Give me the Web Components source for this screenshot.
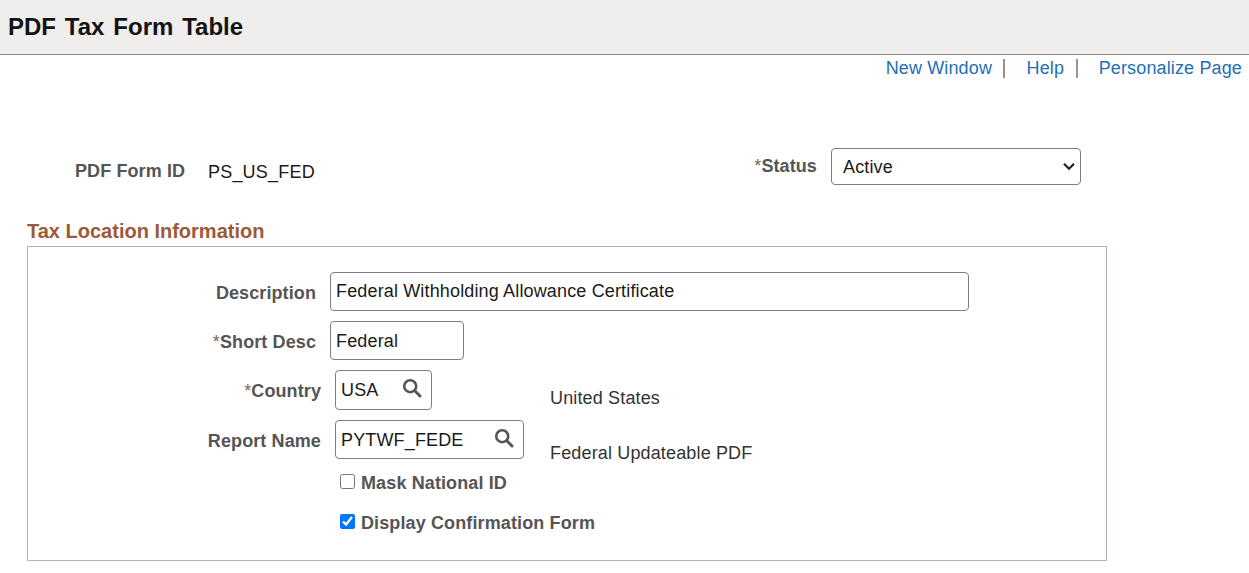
<!DOCTYPE html>
<html lang="en">
<head>
<meta charset="utf-8">
<title>PDF Tax Form Table</title>
<style>
  html, body { margin: 0; background: #fff; }
  body { font-family: "Liberation Sans", Arial, sans-serif; height: 573px; overflow: hidden; }
</style>
</head>
<body>
<page-header>PDF Tax Form Table</page-header>
<page-links>
  <a slot="a">New Window</a>
  <a slot="b">Help</a>
  <a slot="c">Personalize Page</a>
</page-links>
<form-summary label="PDF Form ID" value="PS_US_FED" status="Active"></form-summary>
<group-box heading="Tax Location Information">
  <form-field label="Description" label-width="288">
    <text-box width="639" line="37">Federal Withholding Allowance Certificate</text-box>
  </form-field>
  <form-field label="Short Desc" required label-width="288">
    <text-box width="134">Federal</text-box>
  </form-field>
  <form-field label="Country" required label-width="293" side-top="18">
    <text-box width="97" height="40" lookup="60">USA</text-box>
    <span slot="side">United States</span>
  </form-field>
  <form-field label="Report Name" label-width="293" side-top="23">
    <text-box width="189" lookup="152">PYTWF_FEDE</text-box>
    <span slot="side">Federal Updateable PDF</span>
  </form-field>
  <check-field label="Mask National ID"></check-field>
  <check-field label="Display Confirmation Form" checked></check-field>
</group-box>

<script>
class PageHeader extends HTMLElement {
  constructor() {
    super();
    this.attachShadow({ mode: 'open' });
    this.shadowRoot.innerHTML = `
      <style>
        :host {
          display: flex;
          align-items: center;
          height: 54px;
          padding-left: 8px;
          background: #efeeec;
          border-bottom: 1px solid #8a8580;
          font-size: 24px;
          font-weight: bold;
          color: #141414;
          word-spacing: 2.2px;
        }
      </style>
      <slot></slot>
    `;
  }
}

class PageLinks extends HTMLElement {
  constructor() {
    super();
    this.attachShadow({ mode: 'open' });
    this.shadowRoot.innerHTML = `
      <style>
        :host {
          display: flex;
          justify-content: flex-end;
          align-items: center;
          height: 26px;
          padding-right: 7px;
          font-size: 18px;
          letter-spacing: .14px;
          color: #1f6fb5;
        }
        .sep {
          width: 1.5px;
          height: 19px;
          background: #a98a76;
          margin: 0 22px 0 11px;
        }
        .sep.two { margin: 0 21px 0 12px; background: #8f98a3; }
      </style>
      <slot name="a"></slot><span class="sep"></span>
      <slot name="b"></slot><span class="sep two"></span>
      <slot name="c"></slot>
    `;
  }
}

class FormSummary extends HTMLElement {
  constructor() {
    super();
    this.attachShadow({ mode: 'open' });
    this.shadowRoot.innerHTML = `
      <style>
        :host {
          display: flex;
          align-items: flex-start;
          margin-top: 67px;
          height: 37px;
          padding-left: 75px;
          font-size: 18px;
        }
        .label { font-weight: bold; color: #555; letter-spacing: .1px; }
        .id-label { margin-top: 13px; width: 133px; }
        .value { margin-top: 14px; color: #1a1a1a; width: 545px; letter-spacing: .2px; }
        .status { margin-top: 8px; width: 64px; white-space: nowrap; text-align: right; }
        .star { font-weight: normal; color: #7a6a5c; }
        .select { position: relative; margin-left: 14px; }
        select {
          display: block;
          width: 250px;
          height: 37px;
          padding: 0 11px;
          box-sizing: border-box;
          border: 1px solid #7f7f7f;
          border-radius: 4px;
          background: #fff;
          appearance: none;
          font: 18px "Liberation Sans", Arial, sans-serif;
          letter-spacing: .15px;
          color: #1a1a1a;
        }
        svg { position: absolute; right: 6px; top: 14px; width: 12px; height: 9px; pointer-events: none; }
      </style>
      <span class="label id-label"></span>
      <span class="value"></span>
      <span class="label status"><span class="star">*</span>Status</span>
      <div class="select">
        <select><option></option></select>
        <svg viewBox="0 0 12 9" fill="none" stroke="#222" stroke-width="2.2"><path d="M1 1.8 6 6.8 11 1.8"/></svg>
      </div>
    `;
    this.shadowRoot.querySelector('.id-label').textContent = this.getAttribute('label');
    this.shadowRoot.querySelector('.value').textContent = this.getAttribute('value');
    this.shadowRoot.querySelector('option').textContent = this.getAttribute('status');
  }
}

class GroupBox extends HTMLElement {
  constructor() {
    super();
    this.attachShadow({ mode: 'open' });
    this.shadowRoot.innerHTML = `
      <style>
        :host {
          display: block;
          margin: 34px 0 0 27px;
          width: 1080px;
        }
        h2 {
          margin: 0;
          height: 27px;
          font-size: 20px;
          line-height: 25px;
          font-weight: bold;
          color: #9c5a38;
        }
        .box {
          box-sizing: border-box;
          height: 315px;
          border: 1px solid #b5b1ab;
          padding-top: 25px;
          display: flex;
          flex-direction: column;
          gap: 10px;
        }
      </style>
      <h2></h2>
      <div class="box"><slot></slot></div>
    `;
    this.shadowRoot.querySelector('h2').textContent = this.getAttribute('heading');
  }
}

class FormField extends HTMLElement {
  constructor() {
    super();
    this.attachShadow({ mode: 'open' });
    this.shadowRoot.innerHTML = `
      <style>
        :host {
          display: flex;
          align-items: center;
          font-size: 18px;
        }
        .label {
          flex: none;
          margin-right: 14px;
          text-align: right;
          font-weight: bold;
          letter-spacing: .1px;
          color: #555;
          padding-top: 3px;
        }
        .star { font-weight: normal; color: #7a6a5c; }
        .control { flex: none; }
        /* no height of its own, the text must not stretch the row */
        .side { align-self: flex-start; height: 0; color: #333; letter-spacing: .15px; }
      </style>
      <span class="label"></span>
      <div class="control"><slot></slot></div>
      <div class="side"><slot name="side"></slot></div>
    `;
    const $label = this.shadowRoot.querySelector('.label');
    $label.style.width = this.getAttribute('label-width') + 'px';
    $label.innerHTML = (this.hasAttribute('required') ? '<span class="star">*</span>' : '');
    $label.append(this.getAttribute('label'));
    // the two lookup rows share one column, so the side text lines up
    if (this.hasAttribute('side-top')) {
      this.shadowRoot.querySelector('.control').style.width = '215px';
      this.shadowRoot.querySelector('.side').style.marginTop = this.getAttribute('side-top') + 'px';
    }
  }
}

class TextBox extends HTMLElement {
  constructor() {
    super();
    this.attachShadow({ mode: 'open' });
    const lookup = this.getAttribute('lookup');
    this.shadowRoot.innerHTML = `
      <style>
        :host {
          display: block;
          box-sizing: border-box;
          position: relative;
          height: 39px;
          padding: 0 5px;
          border: 1px solid #7f7f7f;
          border-radius: 4px;
          background: #fff;
          font-size: 18px;
          line-height: 37px;
          letter-spacing: .15px;
          color: #1a1a1a;
        }
        svg { position: absolute; top: 7px; width: 20px; height: 20px; }
      </style>
      <slot></slot>
      ${lookup ? `<svg viewBox="0 0 20 20" style="left:${+lookup + 6}px" fill="none" stroke="#555" stroke-linecap="round">
        <circle cx="8.2" cy="8.2" r="6" stroke-width="2.6"/>
        <path d="M12.8 12.8 18 18" stroke-width="3"/>
      </svg>` : ''}
    `;
    this.style.width = this.getAttribute('width') + 'px';
    if (this.hasAttribute('height')) this.style.height = this.getAttribute('height') + 'px';
    this.style.lineHeight = (this.getAttribute('line') || 39) + 'px';
  }
}

class CheckField extends HTMLElement {
  constructor() {
    super();
    this.attachShadow({ mode: 'open' });
    this.shadowRoot.innerHTML = `
      <style>
        :host {
          display: flex;
          align-items: center;
          height: 30px;
          padding-left: 312px;
          font-size: 18px;
          font-weight: bold;
          letter-spacing: .12px;
          color: #555;
        }
        input {
          margin: 0 6px 6px 0;
          width: 15px;
          height: 15px;
        }
        span { margin-bottom: 2px; }
      </style>
      <input type="checkbox">
      <span></span>
    `;
    this.shadowRoot.querySelector('span').textContent = this.getAttribute('label');
    this.shadowRoot.querySelector('input').checked = this.hasAttribute('checked');
  }
}

customElements.define('page-header', PageHeader);
customElements.define('page-links', PageLinks);
customElements.define('form-summary', FormSummary);
customElements.define('group-box', GroupBox);
customElements.define('form-field', FormField);
customElements.define('text-box', TextBox);
customElements.define('check-field', CheckField);
</script>
</body>
</html>
